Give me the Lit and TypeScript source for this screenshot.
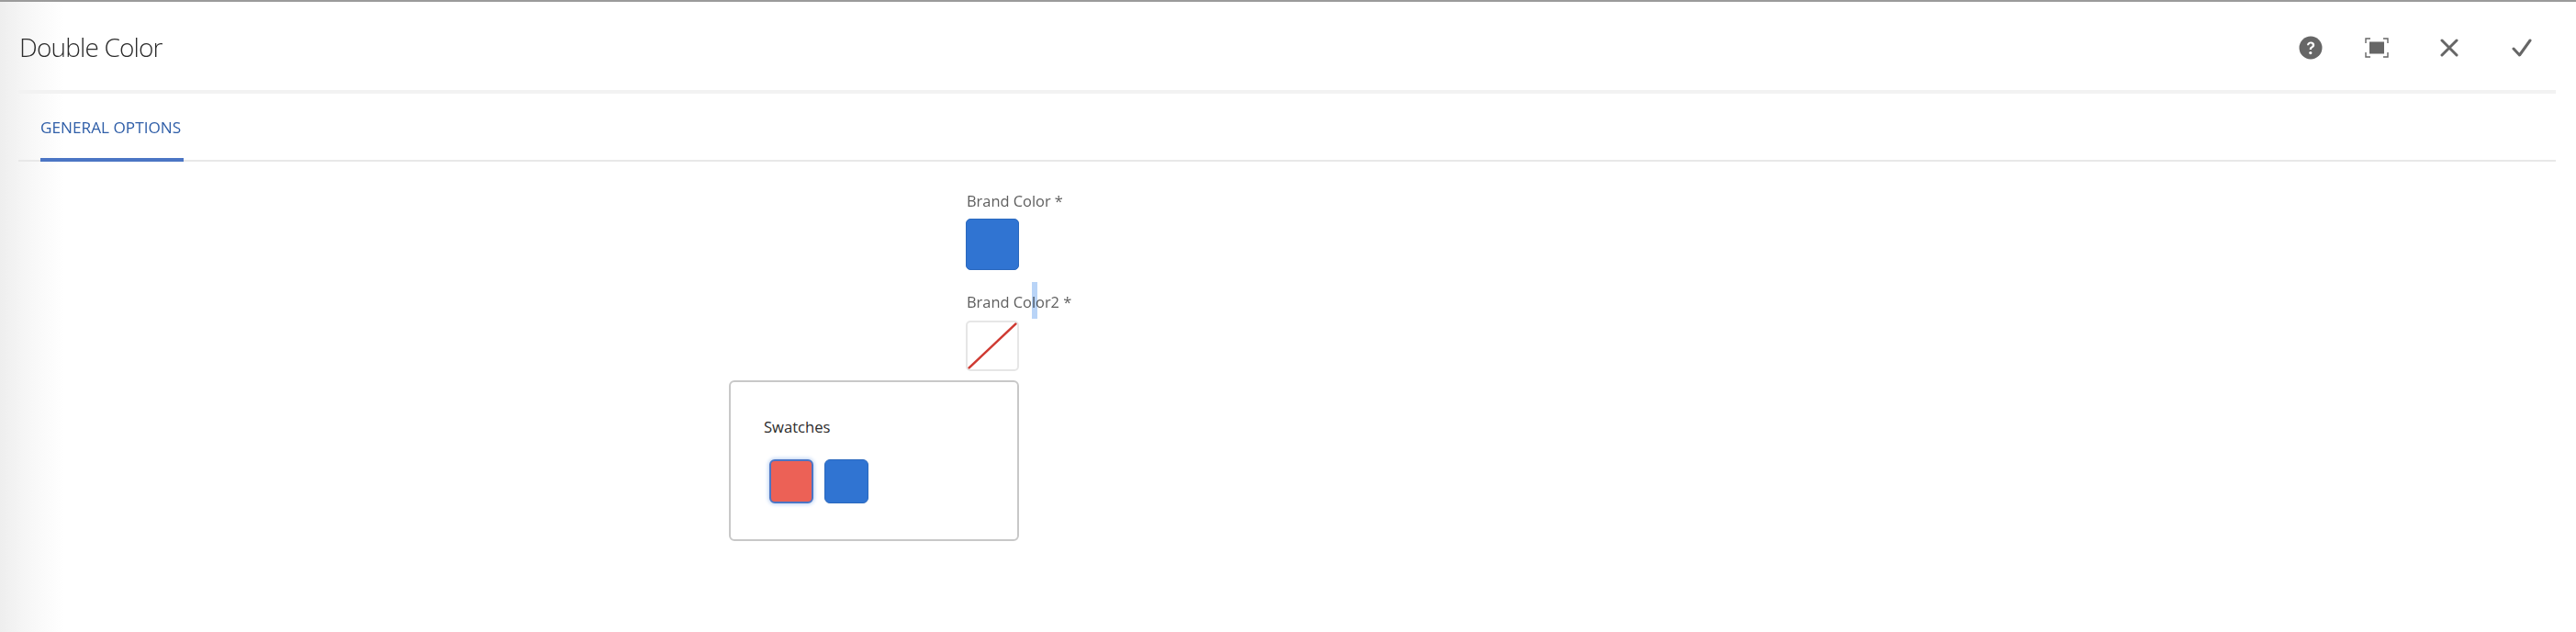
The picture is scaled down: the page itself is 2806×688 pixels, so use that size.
import { LitElement, html, css } from "lit";
import { customElement } from "lit/decorators.js";

@customElement("app-root")
export class AppRoot extends LitElement {
  static styles = css`
    :host { display: block; position: relative; width: 2806px; height: 688px; background: #fff; overflow: hidden; font-family: "Open Sans", "Noto Sans", sans-serif; box-sizing: border-box; border-top: 2px solid #9b9b9b; }
    * { box-sizing: border-box; }
    .shade { position: absolute; left: 0; top: 0; bottom: 0; width: 70px; background: linear-gradient(to right, #eeeeee, #f8f8f8 50%, #ffffff); pointer-events: none; }
    .header { position: relative; display: flex; align-items: center; justify-content: space-between; height: 100px; margin: 0 22px 0 20px; border-bottom: 4px solid #f2f2f2; }
    .title { font-size: 28px; font-weight: 300; color: #2c2c2c; margin-left: 1px; margin-top: 2px; letter-spacing: -0.85px; }
    .actions { display: flex; align-items: center; margin-top: 4px; }
    .icon { display: flex; width: 26px; justify-content: center; }
    .icon svg { display: block; }
    .i1 { margin-right: 46px; }
    .i2 { margin-right: 53px; }
    .i3 { margin-right: 53px; }
    .i4 { margin-right: 24px; }
    .tabs { position: relative; display: flex; height: 74px; margin: 0 22px 0 20px; padding-left: 24px; border-bottom: 2px solid #e8e8e8; }
    .tab { height: 74px; padding-top: 26px; font-size: 17.2px; line-height: 22px; color: #2f5ea8; border-bottom: 4px solid #4b75c4; white-space: nowrap; margin-bottom: -2px; width: 156px; }
    .form { position: relative; display: flex; flex-direction: column; margin-left: 1052px; width: 60px; padding-top: 31px; }
    .label { font-size: 16.4px; line-height: 24px; color: #5e5e5e; white-space: nowrap; margin-left: 1px; }
    .swatch { width: 58px; border-radius: 5px; }
    .filled { height: 56px; background: #3074d2; border: 1px solid #2a68bd; margin-top: 7px; margin-bottom: 23px; }
    .empty { height: 55px; border: 2px solid #e6e6e6; background: #fff; overflow: hidden; margin-top: 8px; }
    .empty svg { display: block; }
    .sel { position: absolute; left: 72px; top: 131px; width: 6px; height: 40px; background: #b9d4f7; mix-blend-mode: multiply; }
    .popover { position: absolute; left: 794px; top: 412px; width: 316px; height: 175px; background: #fff; border: 2px solid #c8c8c8; border-radius: 6px; padding: 37px 0 0 36px; }
    .pop-title { font-size: 16.6px; line-height: 24px; color: #2c2c2c; }
    .row { display: flex; gap: 12px; margin: 23px 0 0 6px; }
    .chip { width: 48px; height: 48px; border-radius: 6px; }
    .red { background: #ec6156; border: 2px solid #4b75c4; box-shadow: 0 0 4px 1px #b9d0f2; }
    .blue { background: #3074d2; border: 1px solid #2a68bd; }
  `;

  render() {
    return html`
      <div class="shade"></div>
      <div class="header">
        <div class="title">Double Color</div>
        <div class="actions">
          <span class="icon i1"><svg width="26" height="26" viewBox="0 0 26 26"><circle cx="13" cy="13" r="12.5" fill="#666"/><path d="M9 10.2c.2-2.3 1.9-3.6 4.2-3.6 2.3 0 4 1.3 4 3.4 0 1.6-.9 2.4-2 3.1-.9.6-1.2 1-1.2 2h-2.3c0-1.8.5-2.6 1.8-3.4.8-.5 1.3-.9 1.3-1.7 0-.9-.7-1.5-1.8-1.5-1.2 0-1.8.7-1.9 1.7z" fill="#fff"/><circle cx="12.8" cy="18.6" r="1.6" fill="#fff"/></svg></span>
          <span class="icon i2"><svg width="26" height="22" viewBox="0 0 26 22"><path d="M1 6V1h5M20 1h5v5M25 16v5h-5M6 21H1v-5" fill="none" stroke="#666" stroke-width="1.4"/><rect x="5" y="4.5" width="16" height="13" fill="#666"/></svg></span>
          <span class="icon i3"><svg width="20" height="20" viewBox="0 0 20 20"><path d="M2 2l16 16M18 2L2 18" fill="none" stroke="#666" stroke-width="3" stroke-linecap="round"/></svg></span>
          <span class="icon i4"><svg width="22" height="20" viewBox="0 0 22 20"><path d="M2 11l6.5 7L20 2" fill="none" stroke="#666" stroke-width="3" stroke-linecap="round" stroke-linejoin="round"/></svg></span>
        </div>
      </div>
      <div class="tabs"><div class="tab">GENERAL OPTIONS</div></div>
      <div class="form">
        <div class="label">Brand Color *</div>
        <div class="swatch filled"></div>
        <div class="label">Brand Color2 *</div>
        <div class="swatch empty"><svg width="54" height="51" viewBox="0 0 54 51"><line x1="0" y1="51" x2="54" y2="0" stroke="#cf3a32" stroke-width="2.4"/></svg></div>
        <div class="sel"></div>
      </div>
      <div class="popover">
        <div class="pop-title">Swatches</div>
        <div class="row"><div class="chip red"></div><div class="chip blue"></div></div>
      </div>
    `;
  }
}
